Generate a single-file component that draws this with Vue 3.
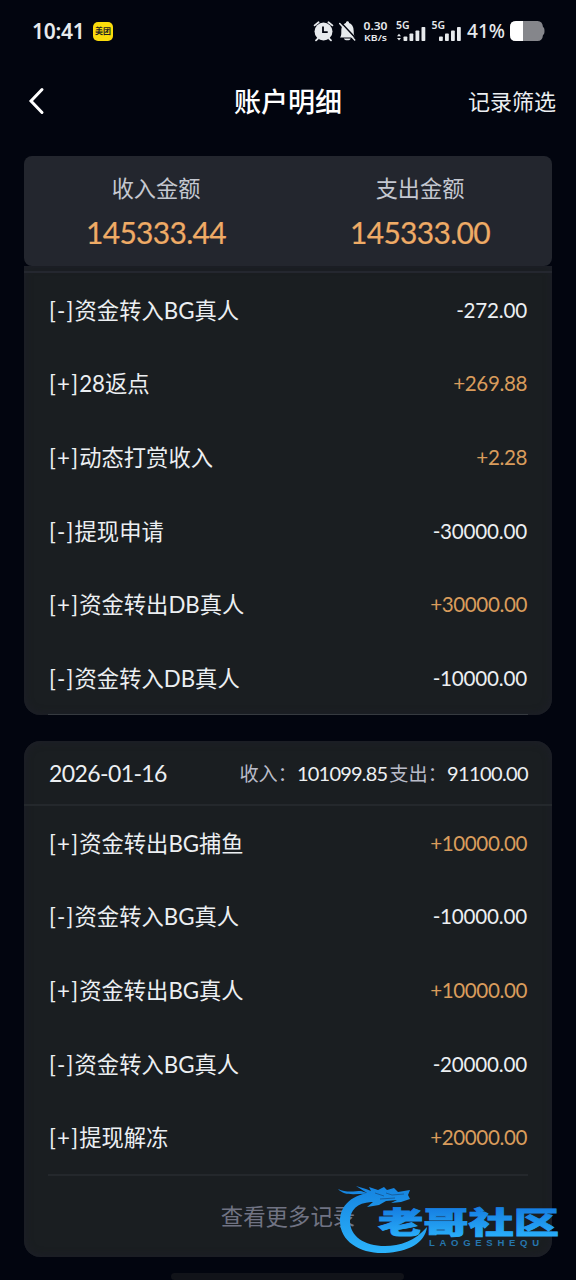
<template>
  <div class="page">
    <header class="status">
      <span class="clock">10:41</span>
      <span class="app-badge">美团</span>
      <svg class="status-icons" width="234" height="26" viewBox="312 18 234 26">
        <!-- alarm -->
        <g fill="none" stroke="#e7eaed" stroke-width="1.8" stroke-linecap="round">
          <path d="M314.600 25.400l4-3.200M332.400 25.400l-4-3.200M318 38.500l-2 1.800M329 38.500l2 1.800" />
        </g>
        <circle cx="323.500" cy="31.500" r="9" fill="#e7eaed" />
        <path d="M323 26.500v5.700h4.700" fill="none" stroke="#02050f" stroke-width="1.800" />
        <!-- muted bell -->
        <path d="M340 37.500c1.400-2 1.300-3 1.300-6.500 0-4.600 2.200-7.200 4.600-7.900 0-2.400 3.200-2.400 3.200 0 2.800.9 4.600 3.600 4.600 7.900 0 3.400.3 4.600 1.500 6.500z" fill="#e7eaed" />
        <path d="M343.800 38.400h7c-.8 2.600-6.200 2.600-7 0z" fill="#e7eaed" />
        <path d="M341 22.600l15 16" stroke="#02050f" stroke-width="1.500" />
        <path d="M339.700 23.600l15 16.300" stroke="#e7eaed" stroke-width="1.500" stroke-linecap="round" />
        <!-- network speed -->
        <g class="tiny">
          <text x="363.500" y="30" font-size="11.500" textLength="24" lengthAdjust="spacingAndGlyphs">0.30</text>
          <text x="364" y="41" font-size="9.500" textLength="23" lengthAdjust="spacingAndGlyphs">KB/s</text>
          <text x="396" y="29" font-size="10" textLength="13.500" lengthAdjust="spacingAndGlyphs">5G</text>
          <text x="431.500" y="29" font-size="10" textLength="13.500" lengthAdjust="spacingAndGlyphs">5G</text>
        </g>
        <path d="M397 36.300l2-2.500 2 2.500zM397 38l2 2.500 2-2.500z" fill="#e7eaed" />
        <g fill="#e7eaed">
          <rect v-for="b in bars" :key="b.x" :x="b.x" :y="b.y" width="3.800" :height="41 - b.y" rx="0.800" />
        </g>
        <text class="percent" x="467" y="38.300" font-size="20.500" textLength="38" lengthAdjust="spacingAndGlyphs">41%</text>
        <!-- battery -->
        <path d="M516 21h21.500q5 0 5.500 6 1.500.5 1.500 4t-1.500 4q-.5 6-5.500 6H516q-6 0-6-6v-8q0-6 6-6z" fill="#85868b" />
        <path d="M523 21h-7q-6 0-6 6v8q0 6 6 6h7z" fill="#fff" />
      </svg>
    </header>

    <nav class="nav">
      <svg class="back" width="18" height="28" viewBox="0 0 18 28">
        <path d="M15 2.500L4 14l11 11.500" fill="none" stroke="#fff" stroke-width="3" stroke-linecap="round" />
      </svg>
      <h1>账户明细</h1>
      <span class="filter">记录筛选</span>
    </nav>

    <section class="summary">
      <div v-for="item in totals" :key="item.label" class="total">
        <span class="total-label">{{ item.label }}</span>
        <span class="total-value">{{ item.value }}</span>
      </div>
    </section>

    <section class="card first">
      <div class="rows">
        <div v-for="(row, i) in recent" :key="i" class="row">
          <span class="name"><span class="sign">{{ row[0] }}</span>{{ row[1] }}</span>
          <span class="amount" :class="{ income: row[2][0] === '+' }">{{ row[2] }}</span>
        </div>
      </div>
    </section>

    <section class="card second">
      <div class="day">
        <span class="date">2026-01-16</span>
        <span class="day-sum">
          <span class="tag">收入：</span><span class="in">101099.85</span><span class="tag out-tag">支出：</span><span class="out">91100.00</span>
        </span>
      </div>
      <div class="rows">
        <div v-for="(row, i) in daily" :key="i" class="row">
          <span class="name"><span class="sign">{{ row[0] }}</span>{{ row[1] }}</span>
          <span class="amount" :class="{ income: row[2][0] === '+' }">{{ row[2] }}</span>
        </div>
      </div>
      <div class="more">查看更多记录</div>
    </section>

    <div class="home-bar"></div>

    <svg class="watermark" width="232" height="84" viewBox="334 1180 232 84">
      <defs>
        <linearGradient id="blue" gradientUnits="userSpaceOnUse" x1="0" y1="1186" x2="0" y2="1254">
          <stop offset="0" stop-color="#1583e0" />
          <stop offset="1" stop-color="#2cb4fc" />
        </linearGradient>
        <linearGradient id="blueText" gradientUnits="userSpaceOnUse" x1="0" y1="1206" x2="0" y2="1238">
          <stop offset="0" stop-color="#147be0" />
          <stop offset="1" stop-color="#2ab0fa" />
        </linearGradient>
      </defs>
      <g fill="url(#blue)">
        <!-- body ring -->
        <path d="M374 1193C352 1193 340 1206 340 1221C340 1242 361 1254 385 1253C408 1252 425 1243 427 1227C415 1241 400 1246 385 1246C364 1246 350 1236 350 1221C350 1210 357 1203 371 1202Z" />
        <!-- head and mane -->
        <path d="M356 1186L366 1189L371 1191L369 1187L378 1190L384 1187L387 1190L394 1188L398 1192L410 1190L408 1195L410 1199L401 1202L391 1203L397 1200L386 1201L379 1205L367 1207L373 1202L364 1202L361 1195L367 1193Z" />
        <path d="M338 1189C346 1193 355 1191 361 1191L370 1194C357 1193 345 1197 338 1189Z" />
      </g>
      <path d="M375 1193l9 3M386 1193l6 2 12-1M380 1199l15-1" fill="none" stroke="#175f9f" stroke-width="1" />
      <text class="brand" x="378" y="1233.200" font-size="30" textLength="181" lengthAdjust="spacingAndGlyphs" fill="url(#blueText)" stroke="url(#blueText)">老哥社区</text>
      <text class="brand-en" x="429" y="1246" font-size="9.500" textLength="110">LAOGESHEQU</text>
    </svg>
  </div>
</template>

<script setup>
const bars = [
  { x: 403.5, y: 36.5 },
  { x: 409.5, y: 33.5 },
  { x: 415.5, y: 30.5 },
  { x: 421.5, y: 27 },
  { x: 439, y: 36.5 },
  { x: 445, y: 33.5 },
  { x: 451, y: 30.5 },
  { x: 457, y: 27 }
]

const totals = [
  { label: '收入金额', value: '145333.44' },
  { label: '支出金额', value: '145333.00' }
]

const recent = [
  ['[-]', '资金转入BG真人', '-272.00'],
  ['[+]', '28返点', '+269.88'],
  ['[+]', '动态打赏收入', '+2.28'],
  ['[-]', '提现申请', '-30000.00'],
  ['[+]', '资金转出DB真人', '+30000.00'],
  ['[-]', '资金转入DB真人', '-10000.00']
]

const daily = [
  ['[+]', '资金转出BG捕鱼', '+10000.00'],
  ['[-]', '资金转入BG真人', '-10000.00'],
  ['[+]', '资金转出BG真人', '+10000.00'],
  ['[-]', '资金转入BG真人', '-20000.00'],
  ['[+]', '提现解冻', '+20000.00']
]
</script>

<style>
body {
  margin: 0;
  background: #02050f;
}
</style>

<style scoped>
.page {
  position: relative;
  width: 576px;
  height: 1280px;
  overflow: hidden;
  background: #02050f;
  color: #eceff2;
  font-family: Lato, 'Noto Sans CJK SC', sans-serif;
  white-space: nowrap;
}

.status {
  display: flex;
  align-items: center;
  height: 62px;
  padding-left: 32px;
}

.clock {
  width: 61px;
  font-family: 'Noto Sans', sans-serif;
  font-size: 21px;
  font-weight: 600;
  letter-spacing: -0.3px;
  color: #e7eaed;
}

.app-badge {
  width: 20px;
  height: 19px;
  border-radius: 5px;
  background: #fbdc0c;
  color: #222;
  font-size: 8px;
  font-weight: 700;
  line-height: 18px;
  text-align: center;
}

.status-icons {
  margin-left: 199px;
}

.tiny text,
.percent {
  fill: #e7eaed;
  font-family: 'Noto Sans', sans-serif;
  font-weight: 600;
}

.percent {
  font-weight: 500;
}

.nav {
  display: grid;
  grid-template-columns: 1fr auto 1fr;
  align-items: center;
  height: 80px;
  padding: 0 20px 0 27px;
}

.back {
  margin-top: -3px;
}

h1 {
  margin: 0 7px 0 0;
  font-size: 27px;
  font-weight: 500;
  line-height: 40px;
  color: #fff;
}

.filter {
  justify-self: end;
  padding-bottom: 4px;
  font-size: 22px;
}

.summary {
  display: grid;
  grid-template-columns: 1fr 1fr;
  width: 528px;
  height: 110px;
  margin: 14px 0 0 24px;
  border-radius: 8px;
  background: #23262e;
}

.total {
  display: flex;
  flex-direction: column;
  align-items: center;
}

.total-label {
  margin-top: 17px;
  font-size: 22.2px;
  line-height: 32px;
  color: #c5c8d1;
}

.total-value {
  margin-top: 8px;
  font-size: 30px;
  line-height: 38px;
  letter-spacing: -0.7px;
  color: #efab66;
  -webkit-text-stroke: 0.2px #efab66;
}

.card {
  box-sizing: border-box;
  width: 528px;
  margin-left: 24px;
  background: #1a1e21;
  box-shadow: inset 0 0 8px #1e1f2a;
}

.first {
  height: 449px;
  padding-top: 5px;
  border-radius: 0 0 16px 16px;
}

.first .rows {
  border-top: 2px solid #24272f;
}

.first::after {
  content: '';
  display: block;
  height: 1px;
  margin: -1px 24px 0;
  background: #363a40;
}

.second {
  height: 516px;
  margin-top: 26px;
  border-radius: 16px;
}

.day {
  display: flex;
  align-items: center;
  justify-content: space-between;
  height: 65px;
  padding: 1px 24px 0 25px;
  box-sizing: border-box;
  border-bottom: 2px solid #24282c;
}

.date {
  font-size: 23px;
  letter-spacing: -0.6px;
}

.day-sum {
  display: flex;
  align-items: center;
  font-size: 20px;
}

.tag {
  font-size: 19.2px;
  color: #b9bcc9;
}

.out-tag {
  margin-left: 2px;
}

.in {
  letter-spacing: -0.8px;
}

.out {
  letter-spacing: -0.6px;
}

.row {
  display: flex;
  align-items: center;
  justify-content: space-between;
  height: 73.6px;
  padding: 0 25px;
}

.name {
  padding-bottom: 2px;
  font-size: 22.3px;
}

.sign {
  letter-spacing: 1.2px;
}

.amount {
  font-size: 20.6px;
  letter-spacing: -0.2px;
}

.income {
  color: #d99c5c;
  letter-spacing: -0.4px;
}

.more {
  margin: 0 24px;
  border-top: 2px solid #24282c;
  font-size: 22.4px;
  line-height: 82px;
  text-align: center;
  color: #707383;
}

.home-bar {
  width: 233px;
  height: 7px;
  margin: 16px 0 0 171px;
  border-radius: 4px;
  background: #111319;
}

/* site mark floating over the list */
.watermark {
  position: absolute;
  left: 334px;
  top: 1180px;
}

.brand {
  font-family: 'Noto Sans CJK SC', sans-serif;
  font-weight: 900;
  stroke-width: 0.8px;
}

.brand-en {
  fill: #2676ae;
  font-family: 'Liberation Sans', sans-serif;
  font-weight: 700;
}
</style>
